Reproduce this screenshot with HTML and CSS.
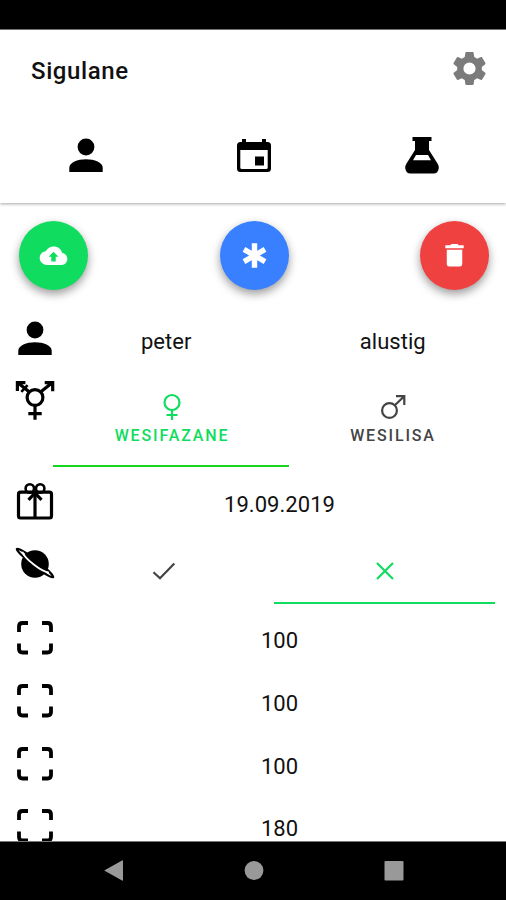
FILE: index.html
```
<!DOCTYPE html>
<html lang="en">
<head>
    <meta charset="UTF-8">
    <meta name="viewport" content="width=device-width, initial-scale=1.0">
    <title>Sigulane</title>
    <link rel="stylesheet" href="styles.css">
</head>
<body>
    <svg class="symbols">
        <symbol id="person" viewBox="0 0 40 40">
            <circle cx="20" cy="11" r="8.4"/>
            <path d="M3.3 36v-4.300C3.300 26.500 11.500 23.300 20 23.300s16.700 3.200 16.700 8.400V36z"/>
        </symbol>
        <symbol id="frame" viewBox="0 0 40 40">
            <path d="M4 14V8.500Q4 5 7.500 5H13M27 5h5.500Q36 5 36 8.500V14M36 25.500v5.500q0 3.500-3.500 3.500H27M13 34.500H7.500Q4 34.500 4 31v-5.500" fill="none" stroke="#000" stroke-width="3.800"/>
        </symbol>
    </svg>
    <div class="status-bar"></div>
    <header class="header">
        <div class="toolbar">
            <h1>Sigulane</h1>
            <svg class="settings" viewBox="2 2 20 20"><path d="M19.430 12.980c.04-.32.07-.64.07-.98s-.03-.66-.07-.98l2.110-1.650c.19-.15.24-.42.12-.64l-2-3.460c-.12-.22-.39-.3-.61-.22l-2.490 1c-.52-.4-1.080-.73-1.690-.98l-.38-2.650A.488.488 0 0 0 14 2h-4c-.25 0-.46.18-.49.42l-.38 2.650c-.61.25-1.170.59-1.690.98l-2.490-1c-.23-.09-.49 0-.61.22l-2 3.460c-.13.22-.07.49.12.64l2.110 1.650c-.04.32-.07.65-.07.98s.03.66.07.98l-2.110 1.650c-.19.15-.24.42-.12.64l2 3.460c.12.22.39.3.61.22l2.490-1c.52.4 1.080.73 1.690.98l.38 2.650c.03.24.24.42.49.42h4c.25 0 .46-.18.49-.42l.38-2.650c.61-.25 1.170-.59 1.690-.98l2.490 1c.23.09.49 0 .61-.22l2-3.460c.12-.22.07-.49-.12-.64l-2.110-1.650zM12 15.700a3.700 3.700 0 1 1 0-7.400 3.700 3.700 0 0 1 0 7.400z"/></svg>
        </div>
        <nav class="tabs">
            <a class="tab"><svg class="icon"><use href="#person"/></svg></a>
            <a class="tab">
                <svg class="icon" viewBox="0 0 40 40">
                    <path fill-rule="evenodd" d="M8 3h4v3h16V3h4v3h1.500Q37 6 37 9.500v23q0 3.500-3.500 3.500h-27Q3 36 3 32.500v-23Q3 6 6.500 6H8zM6.300 14v17.500q0 1.500 1.500 1.500h24.400q1.500 0 1.500-1.500V14z"/>
                    <path d="M21 20.500h9v9h-9z"/>
                </svg>
            </a>
            <a class="tab">
                <svg class="icon" viewBox="0 0 40 40">
                    <path fill-rule="evenodd" d="M10.500 1h19v4H27v9l8.500 13.500Q37 30 36.800 32q-.6 5.500-5.300 5.500h-23Q3.800 37.500 3.200 32 3 30 4.500 27.500L13 14V5h-2.500zM14 19 11 24.300h18L26 19z"/>
                </svg>
            </a>
        </nav>
    </header>

    <main class="content">
        <div class="actions">
            <button class="fab green">
                <svg viewBox="0 0 30 30"><path fill-rule="evenodd" d="M24 12.500C23.200 8.500 19.600 5.700 15.200 5.700c-3.500 0-6.600 1.900-8.200 4.900-3.700.4-6.300 3.300-6.300 6.800 0 4 3.200 7.300 7.300 7.300h15.300c3.400 0 6-2.700 6-6.100 0-3.300-2.300-5.900-5.300-6.100zM17.300 16.300v4.900h-4.600v-4.900H9.900l5.100-5.300 5.100 5.300z"/></svg>
            </button>
            <button class="fab blue">
                <svg viewBox="0 0 30 30"><path d="M15 1.500v27M3.300 8.200l23.400 13.600M26.700 8.200 3.300 21.800" fill="none" stroke="#fff" stroke-width="6"/></svg>
            </button>
            <button class="fab red">
                <svg viewBox="0 0 30 30"><path d="M5.500 4.500h5l1.500-1.400h6l1.500 1.400h5v3h-19zM7 9h16v15q0 2.500-2.500 2.500h-11Q7 26.500 7 24z"/></svg>
            </button>
        </div>

        <div class="row">
            <svg class="icon"><use href="#person"/></svg>
            <span class="value">peter</span>
            <span class="value">alustig</span>
        </div>

        <div class="row gender">
            <svg class="icon" viewBox="0 0 40 40" fill="none" stroke="#000" stroke-width="3.200">
                <circle cx="20" cy="16.500" r="7.900"/>
                <path d="M20 24.500v14.300M13.300 32.700h13.400M25.600 10.900l11.200-9M29.700 1.700h8v8.600M14.400 10.900 3.200 1.900M2.400 9.900V1.700h8"/>
                <path d="M6.300 10.800l6.300-6.600" stroke-width="2.600"/>
            </svg>
            <div class="segment">
                <button class="option wide active">
                    <svg class="sex" viewBox="0 0 28 28"><circle cx="14" cy="9.500" r="7.500"/><path d="M14 17v10M8.500 22h11"/></svg>
                    <span>WESIFAZANE</span>
                </button>
                <button class="option">
                    <svg class="sex" viewBox="0 0 28 28"><circle cx="10.500" cy="17.500" r="7.400"/><path d="M15.800 12.200 25 3.500M17 3.200h8.300v8.800"/></svg>
                    <span>WESILISA</span>
                </button>
            </div>
        </div>

        <div class="row">
            <svg class="icon" viewBox="0 0 40 40" fill="none" stroke="#000" stroke-width="3.200">
                <rect x="3.500" y="10.200" width="33" height="25.800" rx="2"/>
                <path d="M20 11v24"/>
                <path d="M13.500 17.800 20 11l6.500 6.800"/>
                <circle cx="14.800" cy="6.400" r="4.200" stroke-width="2.600"/>
                <circle cx="25.200" cy="6.400" r="4.200" stroke-width="2.600"/>
                <path d="M16 9h8l-1.500 5h-5z" fill="#000" stroke="none"/>
            </svg>
            <span class="value">19.09.2019</span>
        </div>

        <div class="row planet">
            <svg class="icon" viewBox="0 0 40 40" fill="none">
                <ellipse cx="20" cy="19" rx="23" ry="2.800" stroke="#000" stroke-width="2.200" transform="rotate(38 20 19)"/>
                <circle cx="20" cy="20" r="13.800" fill="#000"/>
                <path d="M3 18c3 2 9 3 17 3s14-1 17-3" stroke="#fff" stroke-width="1.900" transform="rotate(38 20 19)"/>
            </svg>
            <div class="segment">
                <button class="option">
                    <svg class="mark" viewBox="0 0 24 24"><path d="M1.500 13.200 8 19.200 22.300 4.500"/></svg>
                </button>
                <button class="option active">
                    <svg class="mark" viewBox="0 0 24 24"><path d="M4 4l16 16M20 4 4 20"/></svg>
                </button>
            </div>
        </div>

        <div class="row">
            <svg class="icon"><use href="#frame"/></svg>
            <span class="value">100</span>
        </div>
        <div class="row">
            <svg class="icon"><use href="#frame"/></svg>
            <span class="value">100</span>
        </div>
        <div class="row">
            <svg class="icon"><use href="#frame"/></svg>
            <span class="value">100</span>
        </div>
        <div class="row">
            <svg class="icon"><use href="#frame"/></svg>
            <span class="value">180</span>
        </div>
    </main>

    <footer class="nav-bar">
        <svg viewBox="0 0 24 24"><path d="M2.200 12.500 20 2.400q1-.5 1 .6v19q0 1.100-1 .6z"/></svg>
        <svg viewBox="0 0 24 24"><circle cx="12" cy="12.500" r="9.400"/></svg>
        <svg viewBox="0 0 24 24"><rect x="2.500" y="3" width="19" height="19.500" rx="1"/></svg>
    </footer>
</body>
</html>
```

FILE: styles.css
```
* {
    box-sizing: border-box;
}
body {
    font-family: Roboto, sans-serif;
    margin: 0;
    height: 900px;
    display: flex;
    flex-direction: column;
    overflow: hidden;
    background-color: #fff;
    color: #111;
}
button {
    border: none;
    padding: 0;
    background: none;
    font-family: inherit;
}
.symbols {
    display: none;
}
.status-bar {
    height: 30px;
    flex-shrink: 0;
    background-color: #000;
    border-bottom: 1px solid #777;
}
.header {
    height: 173px;
    flex-shrink: 0;
    box-shadow: 0 1px 3px rgba(0,0,0,0.35);
}
.toolbar {
    display: flex;
    align-items: center;
    justify-content: space-between;
    height: 78px;
    padding: 0 20px 0 31px;
}
h1 {
    margin: 4px 0 0;
    font-size: 24px;
    font-weight: 500;
    letter-spacing: 0.6px;
}
.settings {
    width: 33px;
    height: 33px;
    margin-bottom: 2px;
    fill: #7b7b7b;
}
.tabs {
    display: flex;
    height: 95px;
    padding: 28px 0 0 2px;
}
.tab {
    flex: 1;
    text-align: center;
}
.icon {
    width: 40px;
    height: 40px;
    flex-shrink: 0;
}
.content {
    flex: 1;
    overflow: hidden;
}
.actions {
    display: flex;
    justify-content: space-between;
    padding: 18px 17px 0 19px;
    height: 106.600px;
}
.fab {
    display: flex;
    align-items: center;
    justify-content: center;
    width: 69px;
    height: 69px;
    border-radius: 50%;
    box-shadow: 0 4px 10px rgba(0,0,0,0.4);
}
.fab svg {
    width: 29px;
    height: 29px;
    fill: #fff;
}
.blue svg {
    width: 27px;
    height: 27px;
}
.green {
    background-color: #10dc60;
}
.blue {
    background-color: #3880ff;
}
.red {
    background-color: #f04141;
}
.row {
    display: flex;
    height: 62.800px;
    padding-left: 15px;
}
.row .icon {
    margin: 9px -2px 0 0;
}
.value {
    flex: 1;
    text-align: center;
    font-size: 22px;
    line-height: 63px;
    letter-spacing: 0.05px;
}
.gender {
    height: 100.200px;
}
.planet {
    height: 73.600px;
}
.segment {
    flex: 1;
    display: flex;
    margin-right: 11px;
}
.option {
    flex: 1;
    display: flex;
    flex-direction: column;
    align-items: center;
    height: 94.500px;
    padding-top: 21px;
    border-bottom: 2.500px solid transparent;
    color: #444;
    font-size: 16px;
    font-weight: 500;
    letter-spacing: 1.850px;
    line-height: 30px;
}
.option span {
    padding-left: 2px;
}
.option.wide {
    flex: 0 0 236px;
}
.option.active {
    color: #10dc60;
    border-bottom-color: #10dc60;
}
.gender .option.active {
    border-bottom-color: #14d61c;
}
.option svg {
    flex-shrink: 0;
    fill: none;
    stroke: currentColor;
    stroke-width: 2.200;
}
.planet .option {
    height: 68.500px;
    padding-top: 24px;
}
.sex {
    width: 28px;
    height: 28px;
}
.gender .option svg {
    margin-left: 1px;
}
.mark {
    width: 24px;
    height: 24px;
}
.nav-bar {
    display: flex;
    gap: 116px;
    justify-content: center;
    height: 59px;
    flex-shrink: 0;
    padding: 16px 0 0 1px;
    background-color: #000;
    border-top: 1px solid #777;
}
.nav-bar svg {
    width: 24px;
    height: 24px;
    fill: #999;
}
```
